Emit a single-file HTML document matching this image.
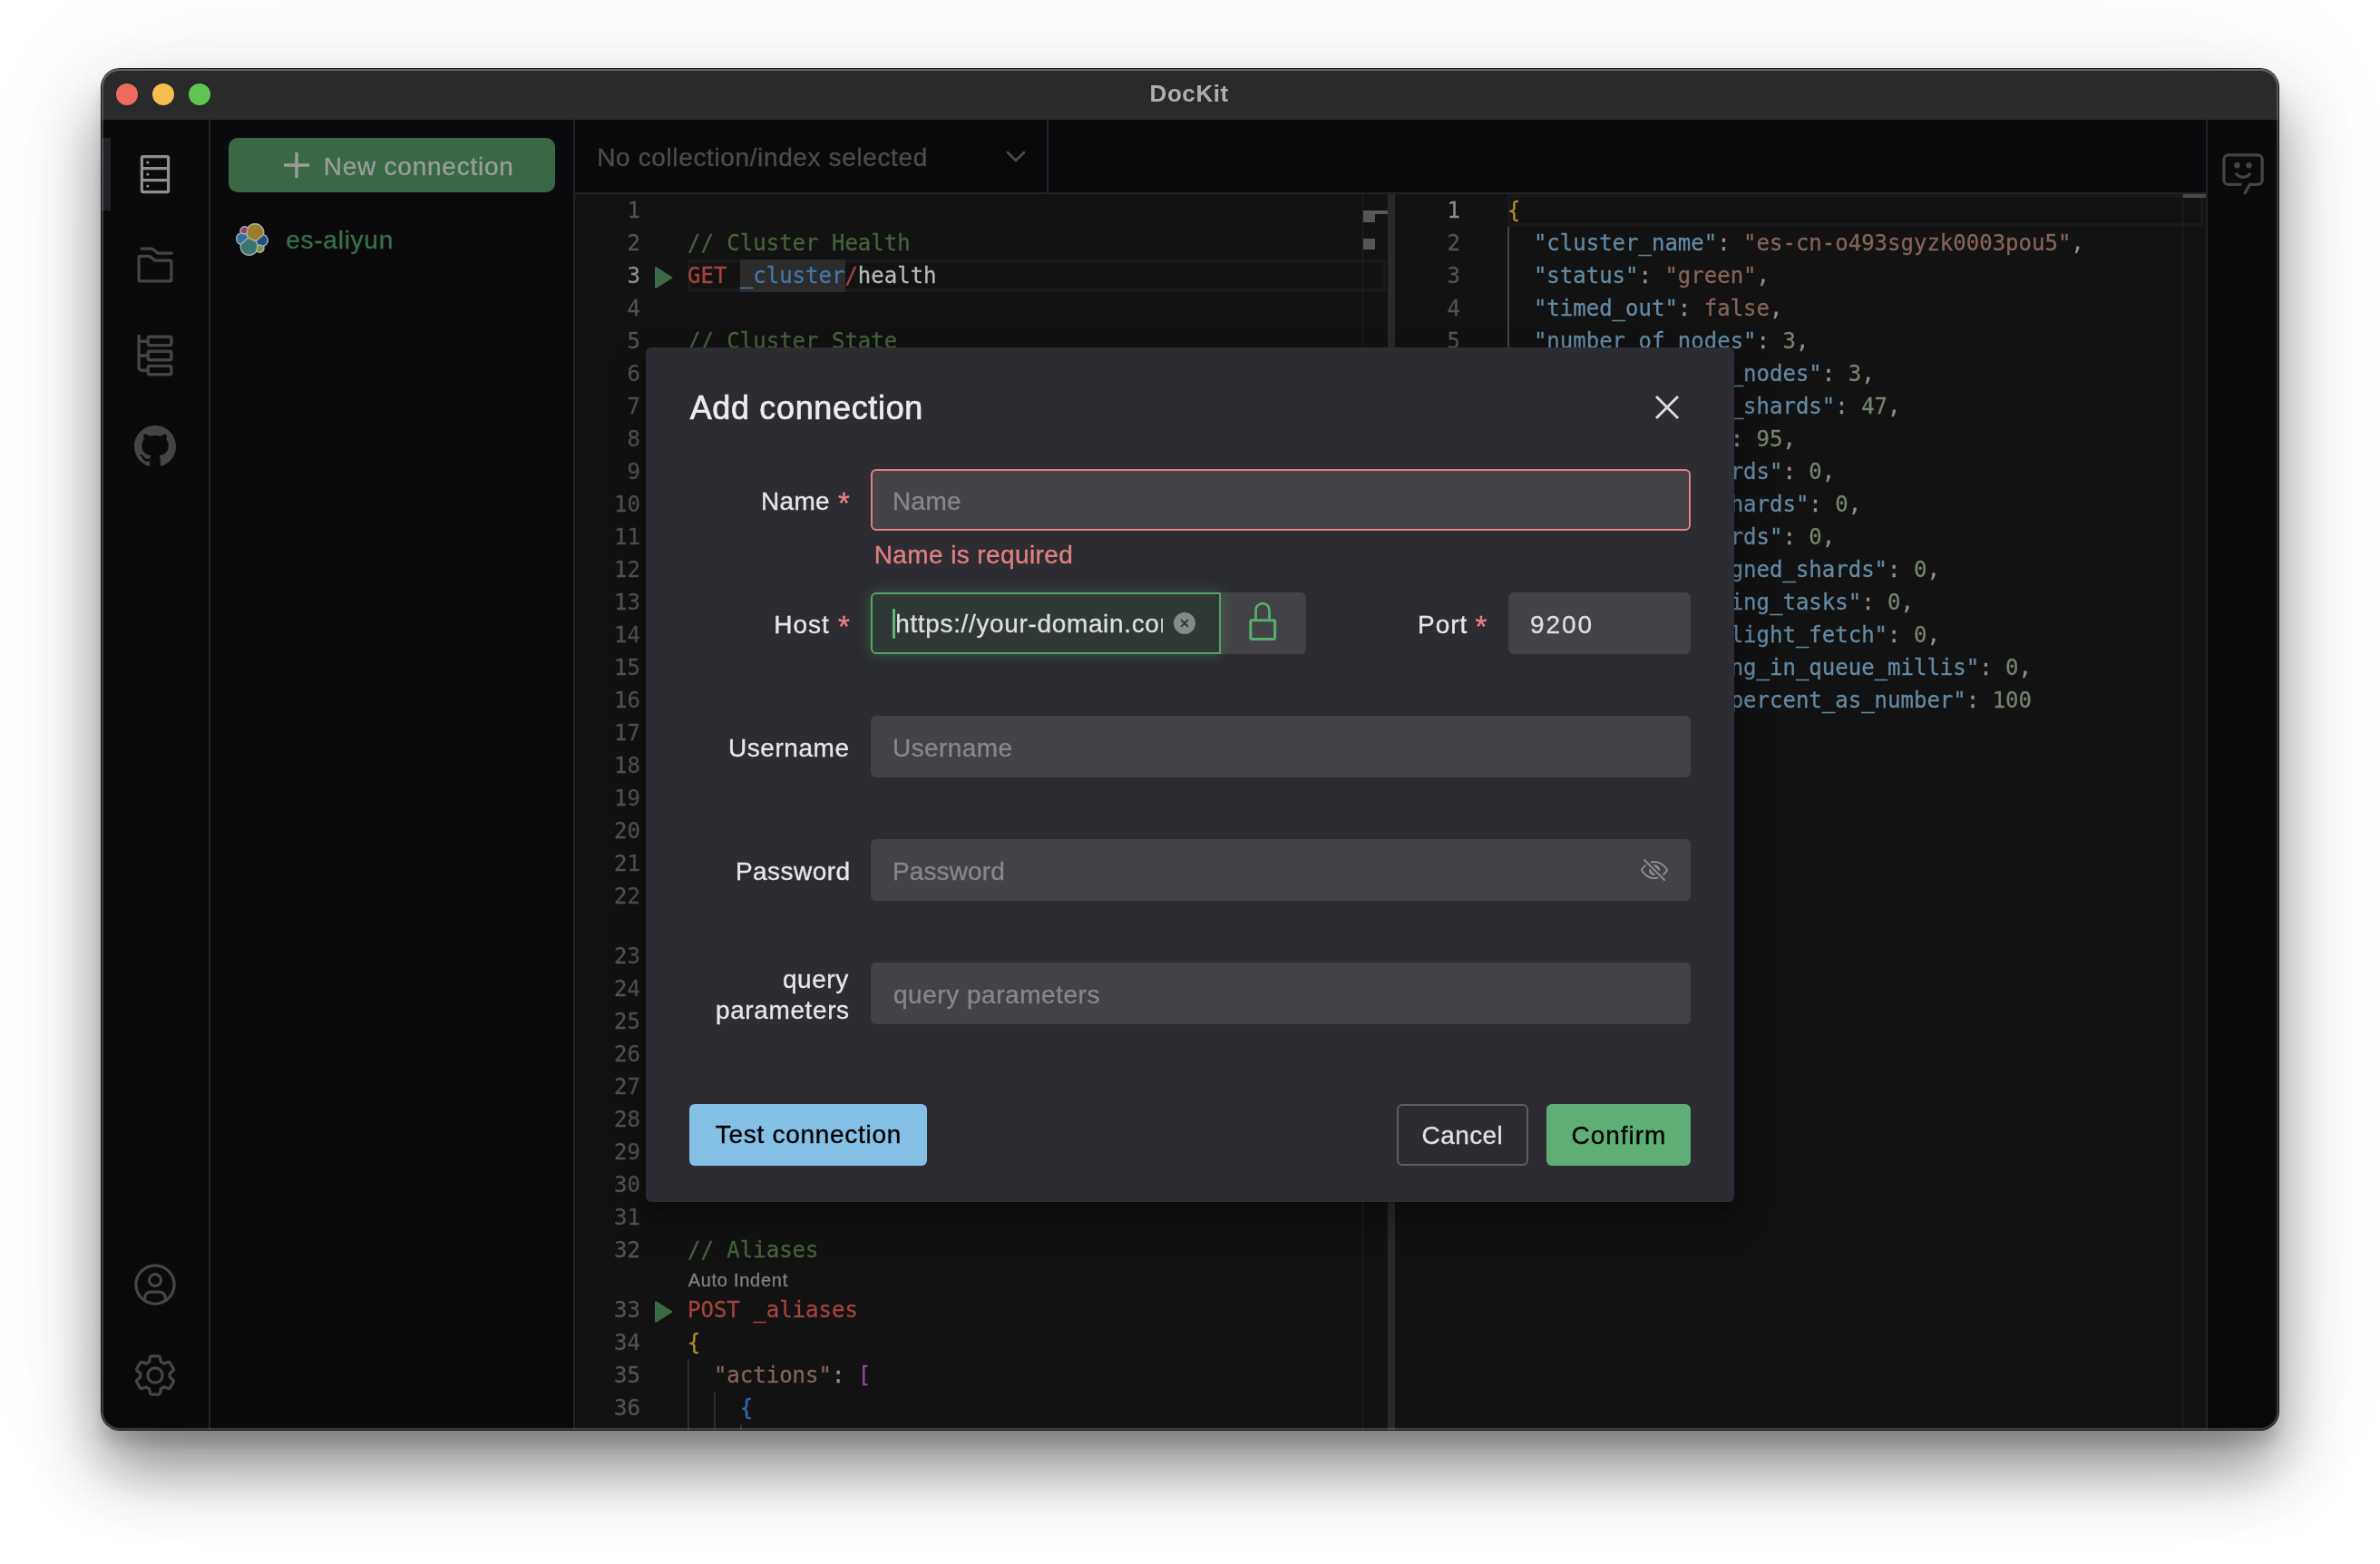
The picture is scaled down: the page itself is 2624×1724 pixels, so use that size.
<!DOCTYPE html>
<html lang="en">
<head>
<meta charset="utf-8">
<title>DocKit</title>
<style>
html,body{margin:0;padding:0;background:#fff;}
body{width:2624px;height:1724px;position:relative;overflow:hidden;font-family:'Liberation Sans', sans-serif;}
#shadow{position:absolute;left:112px;top:76px;width:2400px;height:1500px;border-radius:20px;
  box-shadow:0 0 0 1px rgba(0,0,0,.88), 0 16px 14px rgba(0,0,0,.108), 0 42px 72px rgba(0,0,0,.46), 0 3px 180px rgba(0,0,0,.056);}
#win{position:absolute;left:112px;top:76px;width:2400px;height:1500px;border-radius:20px;overflow:hidden;background:#0a0a0c;}
#abs{position:absolute;left:-112px;top:-76px;width:2624px;height:1724px;will-change:transform;}
#abs div,#abs span,#abs svg{position:absolute;box-sizing:border-box;}
#abs .cl span{position:static;}
.t{white-space:pre;-webkit-text-stroke-width:.35px;}
#edge{position:absolute;left:112px;top:76px;width:2400px;height:1500px;border-radius:20px;box-shadow:inset 0 0 0 2px rgba(255,255,255,.2), inset 0 2px 0 0 rgba(255,255,255,.1);pointer-events:none;}
.ln{font-family:'DejaVu Sans Mono', 'Liberation Mono', monospace;font-size:24px;line-height:36px;height:36px;text-align:right;color:#525252;white-space:pre;}
.ln.act{color:#8c8c8c;}
.cl,.ln{-webkit-text-stroke-width:.3px;}
.cl{font-family:'DejaVu Sans Mono', 'Liberation Mono', monospace;font-size:24px;line-height:36px;height:36px;white-space:pre;color:#8a8a8a;}
.cm{color:#46633a;}
.kw{color:#a4433c;}
.pa{color:#4576a5;}
.wh{color:#b6b6b6;}
.b1{color:#ad8c29;}
.b2{color:#904a98;}
.b3{color:#2c6ab3;}
.st{color:#856458;}
.ky{color:#638aa3;}
.nu{color:#74836b;}
.pu{color:#8f8f8f;}
.inp{background:#424247;border-radius:6px;}
</style>
</head>
<body>
<div id="shadow"></div>
<div id="win"><div id="abs">

<!-- title bar -->
<div style="left:112px;top:76px;width:2400px;height:56px;background:#2a2a2a"></div>
<div style="left:128px;top:92px;width:24px;height:24px;border-radius:50%;background:#ec6a5e"></div>
<div style="left:168px;top:92px;width:24px;height:24px;border-radius:50%;background:#f4bf4f"></div>
<div style="left:208px;top:92px;width:24px;height:24px;border-radius:50%;background:#61c554"></div>

<!-- nav -->
<div style="left:230px;top:132px;width:2px;height:1444px;background:#222326"></div>
<div style="left:112px;top:152px;width:10px;height:80px;background:#222327"></div>
<!-- server icon -->
<svg style="left:145px;top:166px" width="52" height="52" viewBox="0 0 32 32" fill="#8f8f8f"><path d="M24 3H8a2 2 0 0 0-2 2v22a2 2 0 0 0 2 2h16a2 2 0 0 0 2-2V5a2 2 0 0 0-2-2Zm0 2v6H8V5ZM8 19v-6h16v6Zm0 8v-6h16v6Z"/><circle cx="11" cy="8" r="1"/><circle cx="11" cy="16" r="1"/><circle cx="11" cy="24" r="1"/></svg>
<!-- folders icon -->
<svg style="left:145px;top:266px" width="52" height="52" viewBox="0 0 32 32" fill="#444"><path d="M26 28H6a2.002 2.002 0 0 1-2-2V11a2.002 2.002 0 0 1 2-2h5.667a2.012 2.012 0 0 1 1.2.4l3.466 2.6H26a2.002 2.002 0 0 1 2 2v12a2.002 2.002 0 0 1-2 2ZM11.666 11H5.998L6 26h20V14H15.667Z"/><path d="M28 9H17.666l-4-3H6V4h7.667a2.012 2.012 0 0 1 1.2.4L18.333 7H28Z"/></svg>
<!-- tree icon -->
<svg style="left:145px;top:366px" width="52" height="52" viewBox="0 0 32 32" fill="none" stroke="#444" stroke-width="2.1"><path d="M5 1.8V24a2 2 0 0 0 2 2h4M5 6.3h6M5 16h6"/><rect x="11.2" y="3.2" width="15.8" height="5.8" rx="1.1"/><rect x="11.2" y="13.1" width="15.8" height="5.8" rx="1.1"/><rect x="11.2" y="23" width="15.8" height="5.8" rx="1.1"/></svg>
<!-- github -->
<svg style="left:148px;top:468.5px" width="46" height="46" viewBox="0 0 16 16" fill="#444"><path d="M8 0C3.58 0 0 3.58 0 8c0 3.54 2.29 6.53 5.47 7.59.4.07.55-.17.55-.38 0-.19-.01-.82-.01-1.49-2.01.37-2.53-.49-2.69-.94-.09-.23-.48-.94-.82-1.13-.28-.15-.68-.52-.01-.53.63-.01 1.08.58 1.23.82.72 1.21 1.87.87 2.33.66.07-.52.28-.87.51-1.07-1.78-.2-3.64-.89-3.64-3.95 0-.87.31-1.59.82-2.15-.08-.2-.36-1.02.08-2.12 0 0 .67-.21 2.2.82.64-.18 1.32-.27 2-.27.68 0 1.36.09 2 .27 1.53-1.04 2.2-.82 2.2-.82.44 1.1.16 1.92.08 2.12.51.56.82 1.27.82 2.15 0 3.07-1.87 3.75-3.65 3.95.29.25.54.73.54 1.48 0 1.07-.01 1.93-.01 2.2 0 .21.15.46.55.38A8.013 8.013 0 0 0 16 8c0-4.42-3.58-8-8-8z"/></svg>
<!-- user -->
<svg style="left:145px;top:1390px" width="52" height="52" viewBox="0 0 32 32" fill="#454545"><path d="M16 8a5 5 0 1 0 5 5a5 5 0 0 0-5-5Zm0 8a3 3 0 1 1 3-3a3.003 3.003 0 0 1-3 3Z"/><path d="M16 2a14 14 0 1 0 14 14A14.016 14.016 0 0 0 16 2ZM10 26.377V25a3.003 3.003 0 0 1 3-3h6a3.003 3.003 0 0 1 3 3v1.377a11.899 11.899 0 0 1-12 0Zm13.992-1.451A5.002 5.002 0 0 0 19 20h-6a5.002 5.002 0 0 0-4.992 4.926a12 12 0 1 1 15.985 0Z"/></svg>
<!-- settings -->
<svg style="left:145px;top:1490px" width="52" height="52" viewBox="0 0 32 32" fill="#454545"><path d="M27 16.76v-1.53l1.92-1.68A2 2 0 0 0 29.3 11l-2.36-4a2 2 0 0 0-1.73-1a2 2 0 0 0-.64.1l-2.43.82a11.35 11.35 0 0 0-1.31-.75l-.51-2.52a2 2 0 0 0-2-1.61h-4.68a2 2 0 0 0-2 1.61l-.51 2.52a11.48 11.48 0 0 0-1.32.75l-2.38-.86A2 2 0 0 0 6.79 6a2 2 0 0 0-1.73 1L2.7 11a2 2 0 0 0 .41 2.51L5 15.24v1.53l-1.89 1.68A2 2 0 0 0 2.7 21l2.36 4a2 2 0 0 0 1.73 1a2 2 0 0 0 .64-.1l2.43-.82a11.35 11.35 0 0 0 1.31.75l.51 2.52a2 2 0 0 0 2 1.61h4.72a2 2 0 0 0 2-1.61l.51-2.52a11.48 11.48 0 0 0 1.32-.75l2.42.82a2 2 0 0 0 .64.1a2 2 0 0 0 1.73-1l2.28-4a2 2 0 0 0-.41-2.51ZM25.21 24l-3.43-1.16a8.86 8.86 0 0 1-2.71 1.57L18.36 28h-4.72l-.71-3.55a9.36 9.36 0 0 1-2.7-1.57L6.79 24l-2.36-4l2.72-2.4a8.9 8.9 0 0 1 0-3.13L4.43 12l2.36-4l3.43 1.16a8.86 8.86 0 0 1 2.71-1.57L13.64 4h4.72l.71 3.55a9.36 9.36 0 0 1 2.7 1.57L25.21 8l2.36 4l-2.72 2.4a8.9 8.9 0 0 1 0 3.13L27.57 20Z"/><path d="M16 22a6 6 0 1 1 6-6a5.94 5.94 0 0 1-6 6Zm0-10a3.91 3.91 0 0 0-4 4a3.91 3.91 0 0 0 4 4a3.91 3.91 0 0 0 4-4a3.91 3.91 0 0 0-4-4Z"/></svg>

<!-- connection panel -->
<div style="left:632px;top:132px;width:2px;height:1444px;background:#222326"></div>
<div style="left:252px;top:152px;width:360px;height:60px;border-radius:10px;background:#386846"></div>
<svg style="left:312px;top:167px" width="30" height="30" viewBox="0 0 30 30" fill="none" stroke="#9c9c9c" stroke-width="3.400"><path d="M15 1v28M1 15h28"/></svg>
<!-- elastic logo -->
<svg style="left:260px;top:246px" width="36" height="36" viewBox="0 0 32 32">
 <path fill="#b2b2b2" d="M32 16.770c0-2.680-1.670-5.040-4.170-5.950.110-.570.160-1.130.160-1.720C27.990 4.080 23.910 0 18.910 0c-2.940 0-5.650 1.400-7.360 3.760A4.820 4.820 0 0 0 8.600 2.770 4.840 4.840 0 0 0 3.770 7.600c0 .600.110 1.170.300 1.710A6.360 6.360 0 0 0 0 15.260c0 2.700 1.680 5.060 4.190 5.970-.110.550-.160 1.120-.160 1.700 0 5 4.070 9.070 9.070 9.070 2.940 0 5.650-1.410 7.350-3.770a4.800 4.800 0 0 0 2.940 1.010 4.840 4.840 0 0 0 4.830-4.830c0-.600-.110-1.170-.300-1.710A6.380 6.380 0 0 0 32 16.770"/>
 <path fill="#9a7f28" d="M12.580 13.790l7 3.190 7.060-6.190c.100-.510.150-1.010.150-1.550 0-4.350-3.540-7.890-7.890-7.890-2.600 0-5.020 1.280-6.490 3.430l-1.180 6.100 1.350 2.910z"/>
 <path fill="#3a7670" d="M5.330 21.220c-.100.510-.150 1.040-.150 1.580 0 4.360 3.550 7.910 7.920 7.910 2.630 0 5.070-1.300 6.540-3.470l1.170-6.070-1.560-2.970-7.030-3.200-6.890 6.220z"/>
 <path fill="#96406a" d="M5.290 9.110l4.800 1.130 1.050-5.460a3.790 3.790 0 0 0-2.300-.780 3.800 3.800 0 0 0-3.790 3.790c0 .460.080.910.240 1.320"/>
 <path fill="#2f72a0" d="M4.870 10.250a5.340 5.340 0 0 0-3.600 5.030 5.300 5.300 0 0 0 3.420 4.960l6.730-6.080-1.240-2.640-5.310-1.270z"/>
 <path fill="#6f9a3a" d="M20.870 27.210c.660.510 1.460.790 2.290.790a3.800 3.800 0 0 0 3.790-3.790c0-.460-.080-.910-.240-1.320l-4.790-1.120-1.050 5.440z"/>
 <path fill="#1d4f86" d="M21.840 20.500l5.280 1.230a5.370 5.370 0 0 0 3.600-5.040 5.300 5.300 0 0 0-3.430-4.960l-6.900 6.050 1.450 2.720z"/>
</svg>

<!-- toolbar -->
<div style="left:634px;top:212px;width:1798px;height:2px;background:#222326"></div>
<div style="left:1154px;top:132px;width:2px;height:80px;background:#222326"></div>
<svg style="left:1106px;top:160px" width="28" height="24" viewBox="0 0 28 24" fill="none" stroke="#4c4c4c" stroke-width="2.6" stroke-linecap="round" stroke-linejoin="round"><path d="M5 8l9 9l9-9"/></svg>

<!-- left editor -->
<div style="left:634px;top:214px;width:896px;height:1362px;background:#121212"></div>
<div style="left:758px;top:286px;width:770px;height:36px;border:4px solid #191919"></div>
<div style="left:815.5px;top:286px;width:116px;height:36px;background:#2c2c2c"></div>
<div style="left:1502px;top:214px;width:1px;height:1362px;background:#232323"></div>
<div style="left:1503px;top:232px;width:27px;height:4px;background:#5a5a5a"></div>
<div style="left:1503px;top:236px;width:13px;height:9px;background:#555"></div>
<div style="left:1503px;top:263px;width:13px;height:12px;background:#555"></div>
<svg style="left:720px;top:292px" width="24" height="28" viewBox="0 0 24 28"><path d="M3 3.200v21.600L20.500 14z" fill="#3a6b46" stroke="#3a6b46" stroke-width="2" stroke-linejoin="round"/></svg>
<svg style="left:720px;top:1432px" width="24" height="28" viewBox="0 0 24 28"><path d="M3 3.200v21.600L20.500 14z" fill="#3a6b46" stroke="#3a6b46" stroke-width="2" stroke-linejoin="round"/></svg>
<div style="left:758px;top:1498px;width:2px;height:78px;background:#2d2d2d"></div>
<div style="left:787px;top:1534px;width:2px;height:42px;background:#2d2d2d"></div>
<div style="left:816px;top:1570px;width:2px;height:6px;background:#2d2d2d"></div>
<div class="ln" style="left:634px;width:72px;top:214px">1</div>
<div class="ln" style="left:634px;width:72px;top:250px">2</div>
<div class="cl" style="left:758px;top:250px"><span class="cm">// Cluster Health</span></div>
<div class="ln act" style="left:634px;width:72px;top:286px">3</div>
<div class="cl" style="left:758px;top:286px"><span class="kw">GET</span> <span class="pa">_cluster</span><span class="kw">/</span><span class="wh">health</span></div>
<div class="ln" style="left:634px;width:72px;top:322px">4</div>
<div class="ln" style="left:634px;width:72px;top:358px">5</div>
<div class="cl" style="left:758px;top:358px"><span class="cm">// Cluster State</span></div>
<div class="ln" style="left:634px;width:72px;top:394px">6</div>
<div class="ln" style="left:634px;width:72px;top:430px">7</div>
<div class="ln" style="left:634px;width:72px;top:466px">8</div>
<div class="ln" style="left:634px;width:72px;top:502px">9</div>
<div class="ln" style="left:634px;width:72px;top:538px">10</div>
<div class="ln" style="left:634px;width:72px;top:574px">11</div>
<div class="ln" style="left:634px;width:72px;top:610px">12</div>
<div class="ln" style="left:634px;width:72px;top:646px">13</div>
<div class="ln" style="left:634px;width:72px;top:682px">14</div>
<div class="ln" style="left:634px;width:72px;top:718px">15</div>
<div class="ln" style="left:634px;width:72px;top:754px">16</div>
<div class="ln" style="left:634px;width:72px;top:790px">17</div>
<div class="ln" style="left:634px;width:72px;top:826px">18</div>
<div class="ln" style="left:634px;width:72px;top:862px">19</div>
<div class="ln" style="left:634px;width:72px;top:898px">20</div>
<div class="ln" style="left:634px;width:72px;top:934px">21</div>
<div class="ln" style="left:634px;width:72px;top:970px">22</div>
<div class="ln" style="left:634px;width:72px;top:1036px">23</div>
<div class="ln" style="left:634px;width:72px;top:1072px">24</div>
<div class="ln" style="left:634px;width:72px;top:1108px">25</div>
<div class="ln" style="left:634px;width:72px;top:1144px">26</div>
<div class="ln" style="left:634px;width:72px;top:1180px">27</div>
<div class="ln" style="left:634px;width:72px;top:1216px">28</div>
<div class="ln" style="left:634px;width:72px;top:1252px">29</div>
<div class="ln" style="left:634px;width:72px;top:1288px">30</div>
<div class="ln" style="left:634px;width:72px;top:1324px">31</div>
<div class="ln" style="left:634px;width:72px;top:1360px">32</div>
<div class="cl" style="left:758px;top:1360px"><span class="cm">// Aliases</span></div>
<div class="ln" style="left:634px;width:72px;top:1426px">33</div>
<div class="cl" style="left:758px;top:1426px"><span class="kw">POST _aliases</span></div>
<div class="ln" style="left:634px;width:72px;top:1462px">34</div>
<div class="cl" style="left:758px;top:1462px"><span class="b1">{</span></div>
<div class="ln" style="left:634px;width:72px;top:1498px">35</div>
<div class="cl" style="left:758px;top:1498px">  <span class="st">&quot;actions&quot;</span><span class="pu">:</span> <span class="b2">[</span></div>
<div class="ln" style="left:634px;width:72px;top:1534px">36</div>
<div class="cl" style="left:758px;top:1534px">    <span class="b3">{</span></div>

<!-- splitter -->
<div style="left:1530px;top:214px;width:8px;height:1362px;background:#29292b"></div>

<!-- right editor -->
<div style="left:1538px;top:214px;width:894px;height:1362px;background:#121212"></div>
<div style="left:1662px;top:214px;width:768px;height:36px;border:4px solid #191919"></div>
<div style="left:1662px;top:250px;width:2px;height:576px;background:#454545"></div>
<div style="left:2406px;top:214px;width:1px;height:1362px;background:#232323"></div>
<div style="left:2407px;top:214px;width:25px;height:4px;background:#4a4a4a"></div>
<div class="ln act" style="left:1538px;width:72px;top:214px">1</div>
<div class="cl" style="left:1662px;top:214px"><span class="b1">{</span></div>
<div class="ln" style="left:1538px;width:72px;top:250px">2</div>
<div class="cl" style="left:1662px;top:250px">  <span class="ky">&quot;cluster_name&quot;</span><span class="pu">:</span> <span class="st">&quot;es-cn-o493sgyzk0003pou5&quot;</span><span class="pu">,</span></div>
<div class="ln" style="left:1538px;width:72px;top:286px">3</div>
<div class="cl" style="left:1662px;top:286px">  <span class="ky">&quot;status&quot;</span><span class="pu">:</span> <span class="st">&quot;green&quot;</span><span class="pu">,</span></div>
<div class="ln" style="left:1538px;width:72px;top:322px">4</div>
<div class="cl" style="left:1662px;top:322px">  <span class="ky">&quot;timed_out&quot;</span><span class="pu">:</span> <span class="st">false</span><span class="pu">,</span></div>
<div class="ln" style="left:1538px;width:72px;top:358px">5</div>
<div class="cl" style="left:1662px;top:358px">  <span class="ky">&quot;number_of_nodes&quot;</span><span class="pu">:</span> <span class="nu">3</span><span class="pu">,</span></div>
<div class="ln" style="left:1538px;width:72px;top:394px">6</div>
<div class="cl" style="left:1662px;top:394px">  <span class="ky">&quot;number_of_data_nodes&quot;</span><span class="pu">:</span> <span class="nu">3</span><span class="pu">,</span></div>
<div class="ln" style="left:1538px;width:72px;top:430px">7</div>
<div class="cl" style="left:1662px;top:430px">  <span class="ky">&quot;active_primary_shards&quot;</span><span class="pu">:</span> <span class="nu">47</span><span class="pu">,</span></div>
<div class="ln" style="left:1538px;width:72px;top:466px">8</div>
<div class="cl" style="left:1662px;top:466px">  <span class="ky">&quot;active_shards&quot;</span><span class="pu">:</span> <span class="nu">95</span><span class="pu">,</span></div>
<div class="ln" style="left:1538px;width:72px;top:502px">9</div>
<div class="cl" style="left:1662px;top:502px">  <span class="ky">&quot;relocating_shards&quot;</span><span class="pu">:</span> <span class="nu">0</span><span class="pu">,</span></div>
<div class="ln" style="left:1538px;width:72px;top:538px">10</div>
<div class="cl" style="left:1662px;top:538px">  <span class="ky">&quot;initializing_shards&quot;</span><span class="pu">:</span> <span class="nu">0</span><span class="pu">,</span></div>
<div class="ln" style="left:1538px;width:72px;top:574px">11</div>
<div class="cl" style="left:1662px;top:574px">  <span class="ky">&quot;unassigned_shards&quot;</span><span class="pu">:</span> <span class="nu">0</span><span class="pu">,</span></div>
<div class="ln" style="left:1538px;width:72px;top:610px">12</div>
<div class="cl" style="left:1662px;top:610px">  <span class="ky">&quot;delayed_unassigned_shards&quot;</span><span class="pu">:</span> <span class="nu">0</span><span class="pu">,</span></div>
<div class="ln" style="left:1538px;width:72px;top:646px">13</div>
<div class="cl" style="left:1662px;top:646px">  <span class="ky">&quot;number_of_pending_tasks&quot;</span><span class="pu">:</span> <span class="nu">0</span><span class="pu">,</span></div>
<div class="ln" style="left:1538px;width:72px;top:682px">14</div>
<div class="cl" style="left:1662px;top:682px">  <span class="ky">&quot;number_of_in_flight_fetch&quot;</span><span class="pu">:</span> <span class="nu">0</span><span class="pu">,</span></div>
<div class="ln" style="left:1538px;width:72px;top:718px">15</div>
<div class="cl" style="left:1662px;top:718px">  <span class="ky">&quot;task_max_waiting_in_queue_millis&quot;</span><span class="pu">:</span> <span class="nu">0</span><span class="pu">,</span></div>
<div class="ln" style="left:1538px;width:72px;top:754px">16</div>
<div class="cl" style="left:1662px;top:754px">  <span class="ky">&quot;active_shards_percent_as_number&quot;</span><span class="pu">:</span> <span class="nu">100</span></div>
<div class="ln" style="left:1538px;width:72px;top:790px">17</div>
<div class="cl" style="left:1662px;top:790px"><span class="b1">}</span></div>

<!-- right panel -->
<div style="left:2432px;top:132px;width:80px;height:1444px;background:#0a0a0c"></div>
<div style="left:2432px;top:132px;width:2px;height:1444px;background:#222326"></div>
<svg style="left:2447px;top:166px" width="52" height="52" viewBox="0 0 32 32" fill="#444"><path d="M16 19a6.990 6.990 0 0 1-5.833-3.129l1.666-1.107a5 5 0 0 0 8.334 0l1.666 1.107A6.990 6.990 0 0 1 16 19zm4-11a2 2 0 1 0 2 2a1.980 1.980 0 0 0-2-2zm-8 0a2 2 0 1 0 2 2a1.980 1.980 0 0 0-2-2z"/><path d="M17.736 30L16 29l4-7h6a1.997 1.997 0 0 0 2-2V6a1.997 1.997 0 0 0-2-2H6a1.997 1.997 0 0 0-2 2v14a1.997 1.997 0 0 0 2 2h9v2H6a4 4 0 0 1-4-4V6a3.999 3.999 0 0 1 4-4h20a3.999 3.999 0 0 1 4 4v14a4 4 0 0 1-4 4h-4.835Z"/></svg>

<!-- modal -->
<div style="left:712px;top:383px;width:1200px;height:942px;border-radius:6px;background:#2c2c32;box-shadow:0 6px 12px -8px rgba(0,0,0,.24),0 12px 24px 0 rgba(0,0,0,.16),0 18px 36px 16px rgba(0,0,0,.10)"></div>
<svg style="left:1822px;top:433px" width="32" height="32" viewBox="0 0 32 32" fill="none" stroke="#dcdcdc" stroke-width="3"><path d="M4 4l24 24M28 4L4 28"/></svg>
<!-- name -->
<div class="inp" style="left:960px;top:517px;width:904px;height:68px;border:2px solid #e08080"></div>
<!-- host -->
<div style="left:1346px;top:653px;width:94px;height:68px;border-radius:0 6px 6px 0;background:#424247"></div>
<div style="left:960px;top:653px;width:386px;height:68px;border-radius:6px 0 0 6px;background:#2f3836;border:2px solid #52a564;box-shadow:0 0 16px 0 rgba(82,165,100,.36)"></div>
<div style="left:984.3px;top:670.5px;width:3px;height:33px;background:#5fb874;border-radius:1px"></div>
<span class="t" id="v_host" style="left:987.2px;top:670.3px;font-size:28px;line-height:36px;color:#dedede;letter-spacing:0.65px">https://your-domain.com</span>
<div style="left:1282px;top:655px;width:62px;height:64px;background:#2f3836"></div>
<svg style="left:1294px;top:675px" width="24" height="24" viewBox="0 0 24 24"><circle cx="12" cy="12" r="12" fill="#858987"/><path d="M8.600 8.600l6.800 6.800M15.400 8.600l-6.800 6.800" stroke="#2f3836" stroke-width="1.900" stroke-linecap="round"/></svg>
<svg style="left:1372px;top:660px" width="40" height="50" viewBox="0 0 40 50" fill="none" stroke="#56ad6c"><rect x="6.800" y="23.700" width="26.800" height="20.800" rx="1.5" stroke-width="3.1"/><path d="M12.500 23.600V12.650a7.500 7.500 0 0 1 15 0V23.600" stroke-width="2.800"/></svg>
<div class="inp" style="left:1663px;top:653px;width:201px;height:68px"></div>
<!-- username / password / query -->
<div class="inp" style="left:960px;top:789px;width:904px;height:68px"></div>
<div class="inp" style="left:960px;top:925px;width:904px;height:68px"></div>
<svg style="left:1808px;top:943px" width="32" height="32" viewBox="0 0 512 512" fill="#8c8c8e"><path d="M432 448a15.920 15.920 0 0 1-11.310-4.690l-352-352a16 16 0 0 1 22.620-22.620l352 352A16 16 0 0 1 432 448z"/><path d="M255.660 384c-41.490 0-81.500-12.280-118.920-36.500-34.070-22-64.740-53.510-88.700-91v-.080c19.940-28.570 41.780-52.730 65.240-72.210a2 2 0 0 0 .14-2.940L93.500 161.380a2 2 0 0 0-2.710-.12c-24.920 21-48.050 46.760-69.080 76.920a31.920 31.920 0 0 0-.64 35.540c26.410 41.330 60.400 76.140 98.280 100.650C162 402 207.900 416 255.660 416a239.130 239.130 0 0 0 75.800-12.580 2 2 0 0 0 .77-3.310l-21.580-21.580a4 4 0 0 0-3.830-1 204.800 204.800 0 0 1-51.160 6.470z"/><path d="M490.840 238.600c-26.460-40.920-60.790-75.680-99.270-100.530C349 110.550 302 96 255.660 96a227.340 227.340 0 0 0-74.890 12.830 2 2 0 0 0-.75 3.310l21.550 21.550a4 4 0 0 0 3.880 1 192.820 192.820 0 0 1 50.210-6.690c40.690 0 80.580 12.430 118.550 37 34.710 22.400 65.740 53.880 89.760 91a.13.13 0 0 1 0 .16 310.720 310.720 0 0 1-64.120 72.730 2 2 0 0 0-.15 2.950l19.900 19.890a2 2 0 0 0 2.700.13 343.490 343.490 0 0 0 68.640-78.480 32.200 32.200 0 0 0-.1-34.780z"/><path d="M256 160a95.880 95.880 0 0 0-21.370 2.400 2 2 0 0 0-1 3.380l112.590 112.560a2 2 0 0 0 3.380-1A96 96 0 0 0 256 160z"/><path d="M165.780 233.660a2 2 0 0 0-3.380 1 96 96 0 0 0 115 115 2 2 0 0 0 1-3.380z"/></svg>
<div class="inp" style="left:960px;top:1061px;width:904px;height:68px"></div>
<!-- buttons -->
<div style="left:760px;top:1217px;width:262px;height:68px;border-radius:6px;background:#84bfe6"></div>
<div style="left:1540px;top:1217px;width:145px;height:68px;border-radius:6px;border:2px solid #5d5d62"></div>
<div style="left:1705px;top:1217px;width:159px;height:68px;border-radius:6px;background:#5fae75"></div>

<span class="t" id="t_title" style="top:85.99px;font-size:26px;line-height:34px;color:#aeaeae;font-weight:700;letter-spacing:0.600px;left:1267.50px;-webkit-text-stroke-width:0px;">DocKit</span>
<span class="t" id="t_newconn" style="top:165.50px;font-size:28px;line-height:36px;color:#9c9c9c;letter-spacing:0.769px;left:356.70px;">New connection</span>
<span class="t" id="t_conn" style="top:246.80px;font-size:28px;line-height:36px;color:#387148;letter-spacing:0.750px;left:315.20px;">es-aliyun</span>
<span class="t" id="t_sel" style="top:155.80px;font-size:28px;line-height:36px;color:#4b4b4b;letter-spacing:0.630px;left:658.20px;">No collection/index selected</span>
<span class="t" id="t_modal" style="top:425.53px;font-size:36px;line-height:47px;color:#ececec;letter-spacing:0.654px;left:760.70px;-webkit-text-stroke-width:0.7px;">Add connection</span>
<span class="t" id="l_name" style="top:534.80px;font-size:28px;line-height:36px;color:#e6e6e6;letter-spacing:0.333px;right:1708.97px;">Name</span>
<span class="t" id="l_host" style="top:670.80px;font-size:28px;line-height:36px;color:#e6e6e6;letter-spacing:1.000px;right:1709.12px;">Host</span>
<span class="t" id="l_port" style="top:670.80px;font-size:28px;line-height:36px;color:#e6e6e6;letter-spacing:1.000px;right:1005.64px;">Port</span>
<span class="t" id="l_user" style="top:806.80px;font-size:28px;line-height:36px;color:#e6e6e6;letter-spacing:0.543px;right:1687.48px;">Username</span>
<span class="t" id="l_pass" style="top:942.80px;font-size:28px;line-height:36px;color:#e6e6e6;letter-spacing:0.429px;right:1686.62px;">Password</span>
<span class="t" id="l_q1" style="top:1061.80px;font-size:28px;line-height:36px;color:#e6e6e6;letter-spacing:0.525px;right:1688.33px;">query</span>
<span class="t" id="l_q2" style="top:1095.80px;font-size:28px;line-height:36px;color:#e6e6e6;letter-spacing:0.611px;right:1687.27px;">parameters</span>
<span class="t" id="s_name" style="top:533.37px;font-size:33px;line-height:43px;color:#e88080;left:924.00px;">*</span>
<span class="t" id="s_host" style="top:669.37px;font-size:33px;line-height:43px;color:#e88080;left:924.00px;">*</span>
<span class="t" id="s_port" style="top:669.37px;font-size:33px;line-height:43px;color:#e88080;left:1626.50px;">*</span>
<span class="t" id="p_name" style="top:534.80px;font-size:28px;line-height:36px;color:#87878b;letter-spacing:0.333px;left:984.00px;">Name</span>
<span class="t" id="f_name" style="top:593.80px;font-size:28px;line-height:36px;color:#e08080;letter-spacing:0.400px;left:963.70px;">Name is required</span>
<span class="t" id="v_port" style="top:670.80px;font-size:28px;line-height:36px;color:#dedede;letter-spacing:2.000px;left:1686.90px;">9200</span>
<span class="t" id="p_user" style="top:806.80px;font-size:28px;line-height:36px;color:#87878b;letter-spacing:0.429px;left:984.00px;">Username</span>
<span class="t" id="p_pass" style="top:942.80px;font-size:28px;line-height:36px;color:#87878b;letter-spacing:0.114px;left:984.00px;">Password</span>
<span class="t" id="p_query" style="top:1078.80px;font-size:28px;line-height:36px;color:#87878b;letter-spacing:0.533px;left:985.00px;">query parameters</span>
<span class="t" id="b_test" style="top:1233.30px;font-size:28px;line-height:36px;color:#000;letter-spacing:0.721px;left:788.70px;">Test connection</span>
<span class="t" id="b_cancel" style="top:1233.80px;font-size:28px;line-height:36px;color:#e0e0e0;letter-spacing:0.400px;left:1567.60px;">Cancel</span>
<span class="t" id="b_confirm" style="top:1233.80px;font-size:28px;line-height:36px;color:#000;letter-spacing:0.983px;left:1732.50px;">Confirm</span>
<span class="t" id="cl_auto" style="top:1397.77px;font-size:20px;line-height:26px;color:#808080;letter-spacing:0.720px;left:758.70px;">Auto Indent</span>
</div></div>
<div id="edge"></div>
</body>
</html>
